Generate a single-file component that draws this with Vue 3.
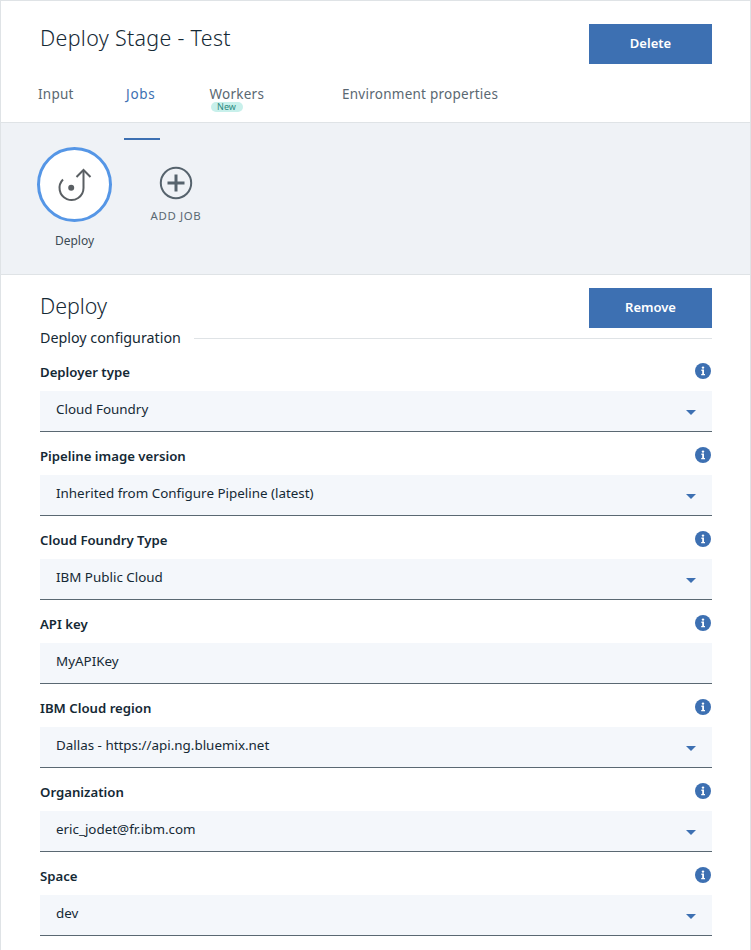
<script setup>
const tabs = [
  { name: 'Input', cls: 'tab-input' },
  { name: 'Jobs', cls: 'tab-jobs active' },
  { name: 'Workers', cls: 'tab-workers', badge: 'New' },
  { name: 'Environment properties', cls: 'tab-env' }
]

const fields = [
  { label: 'Deployer type', value: 'Cloud Foundry', select: true },
  { label: 'Pipeline image version', value: 'Inherited from Configure Pipeline (latest)', select: true },
  { label: 'Cloud Foundry Type', value: 'IBM Public Cloud', select: true },
  { label: 'API key', value: 'MyAPIKey', select: false },
  { label: 'IBM Cloud region', value: 'Dallas - https://api.ng.bluemix.net', select: true },
  { label: 'Organization', value: 'eric_jodet@fr.ibm.com', select: true },
  { label: 'Space', value: 'dev', select: true }
]
</script>

<template>
  <div class="page">
    <header class="head">
      <div class="head-row">
        <h1 class="title">Deploy Stage - Test</h1>
        <button class="btn">Delete</button>
      </div>
      <nav class="tabs">
        <a v-for="tab in tabs" :key="tab.name" class="tab" :class="tab.cls">
          {{ tab.name }}
          <span v-if="tab.badge" class="badge">{{ tab.badge }}</span>
        </a>
      </nav>
    </header>

    <section class="jobs">
      <span class="indicator"></span>
      <div class="job">
        <div class="job-circle">
          <svg width="38" height="38" viewBox="0 0 38 38" fill="none" stroke="#5a5f63" stroke-width="2">
            <circle cx="15.2" cy="21.7" r="3" fill="#5a5f63" stroke="none" />
            <path d="M7 13.5 A12 12 0 1 0 27.5 22 L27.5 4" />
            <path d="M20.5 11 L27.5 4 L34.5 11" />
          </svg>
        </div>
        <span class="job-name">Deploy</span>
      </div>
      <div class="add-job">
        <svg width="34" height="34" viewBox="0 0 34 34" fill="none">
          <circle cx="17" cy="17" r="15.2" stroke="#56636d" stroke-width="2" />
          <path d="M17 8.5 V25.5 M8.5 17 H25.5" stroke="#56636d" stroke-width="3" />
        </svg>
        <span class="add-label">ADD JOB</span>
      </div>
    </section>

    <section class="detail">
      <div class="detail-row">
        <h2 class="detail-title">Deploy</h2>
        <button class="btn">Remove</button>
      </div>
      <div class="config">
        <span>Deploy configuration</span>
        <i class="config-line"></i>
      </div>
      <div v-for="field in fields" :key="field.label" class="field">
        <div class="field-head">
          <label class="field-label">{{ field.label }}</label>
          <svg class="info" width="16" height="16" viewBox="0 0 16 16">
            <circle cx="8" cy="8" r="8" fill="#3d70b2" />
            <path d="M6.4 6.6 H9 V11 H10 V12.3 H6.2 V11 H7.2 V7.9 H6.4 Z" fill="#fff" />
            <circle cx="8" cy="4.6" r="1.2" fill="#fff" />
          </svg>
        </div>
        <div class="input">
          <span>{{ field.value }}</span>
          <svg v-if="field.select" class="caret" width="10" height="5" viewBox="0 0 10 5">
            <path d="M0 0 H10 L5 5 Z" fill="#3d70b2" />
          </svg>
        </div>
      </div>
    </section>
  </div>
</template>

<style>
html, body {
  margin: 0;
  background: #fff;
  overflow: hidden;
}
</style>

<style scoped>
.page {
  box-sizing: border-box;
  width: 751px;
  height: 950px;
  overflow: hidden;
  border-top: 1px solid #dfe3e6;
  border-left: 1px solid #dfe3e6;
  border-right: 1px solid #dfe3e6;
  font-family: "Noto Sans", "Open Sans", sans-serif;
  color: #152935;
}

.head {
  height: 121px;
  box-sizing: border-box;
  padding: 23px 38px 0 39px;
}

.head-row {
  display: flex;
  justify-content: space-between;
  align-items: flex-start;
}

.title {
  margin: 0;
  font-size: 21.4px;
  line-height: 28px;
  font-weight: 300;
  letter-spacing: 0.33px;
}

.btn {
  width: 123px;
  height: 40px;
  border: 0;
  padding: 0 0 2px;
  background: #3d70b2;
  color: #fff;
  font-family: inherit;
  font-size: 13px;
  font-weight: 600;
}

.tabs {
  display: flex;
  margin-top: 20px;
  margin-left: -2px;
}

.tab {
  position: relative;
  font-size: 13.5px;
  line-height: 20px;
  letter-spacing: 0.25px;
  color: #5a6872;
  white-space: nowrap;
}

.tab-input {
  width: 88px;
}

.tab-jobs {
  width: 83.5px;
  letter-spacing: 0.7px;
}

.tab-workers {
  width: 132.5px;
}

.active {
  color: #3d70b2;
}

.badge {
  position: absolute;
  left: 1px;
  top: 18px;
  width: 32px;
  height: 10px;
  border-radius: 5px;
  background: #c8f0eb;
  color: #2d8a80;
  font-size: 9px;
  line-height: 10px;
  letter-spacing: 0;
  text-align: center;
}

.jobs {
  position: relative;
  display: flex;
  height: 153px;
  box-sizing: border-box;
  padding: 24px 0 0 36px;
  background: #eff2f6;
  border-top: 1px solid #dfe3e6;
  border-bottom: 1px solid #dfe3e6;
}

.indicator {
  position: absolute;
  left: 123px;
  top: 15px;
  width: 36px;
  height: 2px;
  background: #3d70b2;
}

.job {
  display: flex;
  flex-direction: column;
  align-items: center;
  width: 75px;
}

.job-circle {
  display: flex;
  align-items: center;
  justify-content: center;
  box-sizing: border-box;
  width: 75px;
  height: 75px;
  border-radius: 50%;
  background: #fff;
  border: 3px solid #5596e6;
}

.job-name {
  margin-top: 10px;
  font-size: 12px;
  line-height: 18px;
  color: #3c4a54;
}

.add-job {
  display: flex;
  flex-direction: column;
  align-items: center;
  width: 60px;
  margin-left: 34px;
  padding-top: 19px;
}

.add-label {
  margin-top: 9px;
  font-size: 11.4px;
  line-height: 14px;
  letter-spacing: 0.65px;
  color: #5a6872;
}

.detail {
  padding: 13px 38px 0 39px;
}

.detail-row {
  display: flex;
  justify-content: space-between;
}

.detail-title {
  margin: 0;
  font-size: 21.4px;
  line-height: 36px;
  font-weight: 300;
}

.config {
  display: flex;
  align-items: center;
  gap: 13px;
  font-size: 14.3px;
  line-height: 20px;
}

.config-line {
  flex: 1;
  height: 1px;
  background: #dfe3e6;
}

.field {
  padding-top: 14px;
}

.field-head {
  display: flex;
  justify-content: space-between;
  align-items: flex-start;
  height: 19px;
  padding-bottom: 10px;
}

.field-label {
  font-size: 13.2px;
  line-height: 20px;
  font-weight: 600;
}

.info {
  margin: 1px 1px 0 0;
}

.input {
  position: relative;
  box-sizing: border-box;
  height: 41px;
  padding: 0 16px;
  background: #f4f7fb;
  border-bottom: 1px solid #5a6872;
  font-size: 13.4px;
  line-height: 37px;
}

.caret {
  position: absolute;
  right: 16px;
  top: 19px;
}
</style>
